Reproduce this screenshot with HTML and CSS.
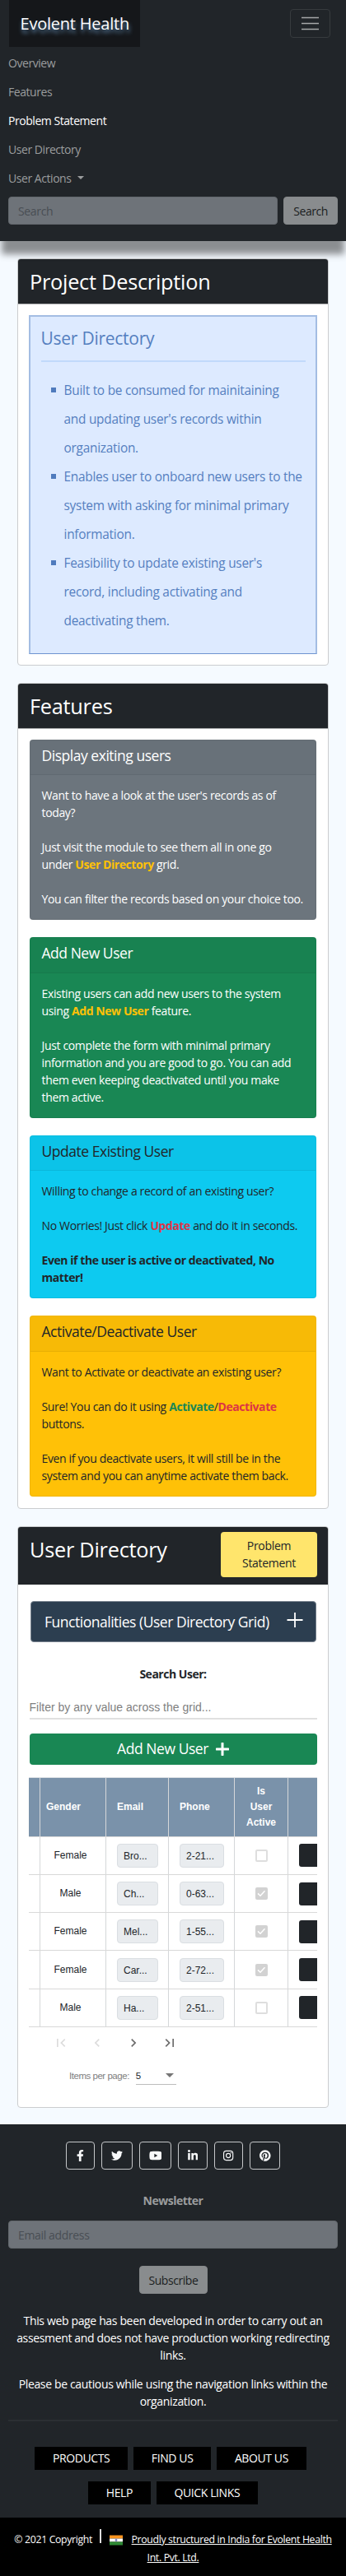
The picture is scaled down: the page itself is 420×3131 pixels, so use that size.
FILE: index.html
```html
<!DOCTYPE html>
<html lang="en">
<head>
<meta charset="utf-8">
<title>Evolent Health</title>
<link rel="stylesheet" href="styles.css">
</head>
<body>
<nav class="navbar">
  <div class="nav-top">
    <a class="brand">Evolent Health</a>
    <button class="toggler" aria-label="Menu"><svg width="21" height="21" viewBox="0 0 21 21"><path d="M0 3.5h21M0 10.5h21M0 17.5h21" stroke="#a6a8a9" stroke-width="1.6"/></svg></button>
  </div>
  <ul class="nav-list">
    <li>Overview</li>
    <li>Features</li>
    <li class="active">Problem Statement</li>
    <li>User Directory</li>
    <li>User Actions <span class="caret"></span></li>
  </ul>
  <form class="nav-search"><div class="field grow">Search</div><div class="btn-gray">Search</div></form>
</nav>

<main>
  <section class="card">
    <h3 class="card-head">Project Description</h3>
    <div class="card-body">
      <div class="notice">
        <h4>User Directory</h4>
        <hr>
        <ul>
          <li>Built to be consumed for mainitaining<br>and updating user's records within<br>organization.</li>
          <li>Enables user to onboard new users to the<br>system with asking for minimal primary<br>information.</li>
          <li>Feasibility to update existing user's<br>record, including activating and<br>deactivating them.</li>
        </ul>
      </div>
    </div>
  </section>

  <section class="card">
    <h3 class="card-head">Features</h3>
    <div class="card-body features">
      <article class="tile gray">
        <h5>Display exiting users</h5>
        <p>Want to have a look at the user's records as of<br>today?<br><br>Just visit the module to see them all in one go<br>under <b class="warn">User Directory</b> grid.<br><br>You can filter the records based on your choice too.</p>
      </article>
      <article class="tile green">
        <h5>Add New User</h5>
        <p>Existing users can add new users to the system<br>using <b class="warn">Add New User</b> feature.<br><br>Just complete the form with minimal primary<br>information and you are good to go. You can add<br>them even keeping deactivated until you make<br>them active.</p>
      </article>
      <article class="tile cyan">
        <h5>Update Existing User</h5>
        <p>Willing to change a record of an existing user?<br><br>No Worries! Just click <b class="danger">Update</b> and do it in seconds.<br><br><b>Even if the user is active or deactivated, No<br>matter!</b></p>
      </article>
      <article class="tile yellow">
        <h5>Activate/Deactivate User</h5>
        <p>Want to Activate or deactivate an existing user?<br><br>Sure! You can do it using <b class="ok">Activate</b>/<b class="danger">Deactivate</b><br>buttons.<br><br>Even if you deactivate users, it will still be in the<br>system and you can anytime activate them back.</p>
      </article>
    </div>
  </section>

  <section class="card directory">
    <div class="card-head split"><h3>User Directory</h3><div class="btn-yellow">Problem<br>Statement</div></div>
    <div class="card-body">
      <div class="accordion"><span>Functionalities (User Directory Grid)</span><svg width="20" height="20" viewBox="0 0 20 20"><path d="M.5 10h19M10 1v18" stroke="#fff" stroke-width="1.8"/></svg></div>
      <div class="search-label">Search User:</div>
      <div class="filter">Filter by any value across the grid...</div>
      <div class="btn-add">Add New User <svg width="16" height="16" viewBox="0 0 16 16"><path d="M1 8h14M8 1v14" stroke="#fff" stroke-width="3" stroke-linecap="round"/></svg></div>
      <div class="grid-wrap">
        <div class="row head"><span></span><span>Gender</span><span>Email</span><span>Phone</span><span>Is<br>User<br>Active</span><span></span></div>
        <div class="row"><span></span><span>Female</span><span><i class="cell">Bro...</i></span><span><i class="cell">2-21...</i></span><span><i class="check"></i></span><span><i class="dark"></i></span></div>
        <div class="row"><span></span><span>Male</span><span><i class="cell">Ch...</i></span><span><i class="cell">0-63...</i></span><span><i class="check on"><svg width="14" height="14" viewBox="0 0 14 14"><path d="M3 7.4l3 2.8 5.5-6" fill="none" stroke="#fff" stroke-width="1.5"/></svg></i></span><span><i class="dark"></i></span></div>
        <div class="row"><span></span><span>Female</span><span><i class="cell">Mel...</i></span><span><i class="cell">1-55...</i></span><span><i class="check on"><svg width="14" height="14" viewBox="0 0 14 14"><path d="M3 7.4l3 2.8 5.5-6" fill="none" stroke="#fff" stroke-width="1.5"/></svg></i></span><span><i class="dark"></i></span></div>
        <div class="row"><span></span><span>Female</span><span><i class="cell">Car...</i></span><span><i class="cell">2-72...</i></span><span><i class="check on"><svg width="14" height="14" viewBox="0 0 14 14"><path d="M3 7.4l3 2.8 5.5-6" fill="none" stroke="#fff" stroke-width="1.5"/></svg></i></span><span><i class="dark"></i></span></div>
        <div class="row"><span></span><span>Male</span><span><i class="cell">Ha...</i></span><span><i class="cell">2-51...</i></span><span><i class="check"></i></span><span><i class="dark"></i></span></div>
      </div>
      <div class="pager">
        <svg class="off" viewBox="0 0 24 24"><path d="M18.41 16.59L13.82 12l4.59-4.59L17 6l-6 6 6 6zM6 6h2v12H6z"/></svg>
        <svg class="off" viewBox="0 0 24 24"><path d="M15.41 7.41L14 6l-6 6 6 6 1.41-1.41L10.83 12z"/></svg>
        <svg viewBox="0 0 24 24"><path d="M10 6L8.59 7.41 13.17 12l-4.58 4.59L10 18l6-6z"/></svg>
        <svg viewBox="0 0 24 24"><path d="M5.59 7.41L10.18 12l-4.59 4.59L7 18l6-6-6-6zM16 6h2v12h-2z"/></svg>
      </div>
      <div class="page-size"><span>Items per page:</span><div class="select">5<i></i></div></div>
    </div>
  </section>
</main>

<footer>
  <div class="social">
    <a class="w36"><svg viewBox="0 0 320 512"><path d="M279.14 288l14.22-92.66h-88.91v-60.13c0-25.35 12.42-50.06 52.24-50.06h40.42V6.26S260.43 0 225.36 0c-73.22 0-121.08 44.38-121.08 124.72v70.62H22.89V288h81.39v224h100.17V288z"/></svg></a>
    <a class="w38"><svg viewBox="0 0 512 512"><path d="M459.37 151.716c.325 4.548.325 9.097.325 13.645 0 138.72-105.583 298.558-298.558 298.558-59.452 0-114.68-17.219-161.137-47.106 8.447.974 16.568 1.299 25.34 1.299 49.055 0 94.213-16.568 130.274-44.832-46.132-.975-84.792-31.188-98.112-72.772 6.498.974 12.995 1.624 19.818 1.624 9.421 0 18.843-1.3 27.614-3.573-48.081-9.747-84.143-51.98-84.143-102.985v-1.299c13.969 7.797 30.214 12.67 47.431 13.319-28.264-18.843-46.781-51.005-46.781-87.391 0-19.492 5.197-37.36 14.294-52.954 51.655 63.675 129.3 105.258 216.365 109.807-1.624-7.797-2.599-15.918-2.599-24.04 0-57.828 46.782-104.934 104.934-104.934 30.213 0 57.502 12.67 76.67 33.137 23.715-4.548 46.456-13.32 66.599-25.34-7.798 24.366-24.366 44.833-46.132 57.827 21.117-2.273 41.584-8.122 60.426-16.243-14.292 20.791-32.161 39.308-52.628 54.253z"/></svg></a>
    <a class="w39"><svg viewBox="0 0 576 512"><path d="M549.655 124.083c-6.281-23.65-24.787-42.276-48.284-48.597C458.781 64 288 64 288 64S117.22 64 74.629 75.486c-23.497 6.322-42.003 24.947-48.284 48.597-11.412 42.867-11.412 132.305-11.412 132.305s0 89.438 11.412 132.305c6.281 23.65 24.787 41.5 48.284 47.821C117.22 448 288 448 288 448s170.78 0 213.371-11.486c23.497-6.321 42.003-24.171 48.284-47.821 11.412-42.867 11.412-132.305 11.412-132.305s0-89.438-11.412-132.305zM232.145 337.591V175.185l142.739 81.205z"/></svg></a>
    <a class="w36"><svg viewBox="0 0 448 512"><path d="M100.28 448H7.4V148.9h92.88zM53.79 108.1C24.09 108.1 0 83.5 0 53.8a53.79 53.79 0 0 1 107.58 0c0 29.7-24.1 54.3-53.79 54.3zM447.9 448h-92.68V302.4c0-34.7-.7-79.2-48.29-79.2-48.29 0-55.69 37.7-55.69 76.7V448h-92.78V148.9h89.08v40.8h1.3c12.4-23.5 42.69-48.3 87.88-48.3 94 0 111.28 61.9 111.28 142.3V448z"/></svg></a>
    <a class="w36"><svg viewBox="0 0 448 512"><rect x="20" y="52" width="408" height="408" rx="112" fill="none" stroke="#f8f9fa" stroke-width="42"/><circle cx="224" cy="256" r="94" fill="none" stroke="#f8f9fa" stroke-width="42"/><circle cx="343" cy="137" r="27"/></svg></a>
    <a class="w37"><svg viewBox="0 0 496 512"><path d="M496 256c0 137-111 248-248 248-25.6 0-50.2-3.9-73.4-11.1 10.1-16.5 25.2-43.5 30.8-65 3-11.6 15.4-59 15.4-59 8.1 15.4 31.7 28.5 56.8 28.5 74.8 0 128.7-68.8 128.7-154.3 0-81.9-66.9-143.2-152.9-143.2-107 0-163.9 71.8-163.9 150.1 0 36.4 19.4 81.7 50.3 96.1 4.7 2.2 7.2 1.2 8.3-3.3.8-3.4 5-20.3 6.9-28.1.6-2.5.3-4.7-1.7-7.1-10.1-12.5-18.3-35.3-18.3-56.6 0-54.7 41.4-107.6 112-107.6 60.9 0 103.6 41.5 103.6 100.9 0 67.1-33.9 113.6-78 113.6-24.3 0-42.6-20.1-36.7-44.8 7-29.5 20.5-61.3 20.5-82.6 0-19-10.2-34.9-31.4-34.9-24.9 0-44.9 25.7-44.9 60.2 0 22 7.4 36.8 7.4 36.8s-24.5 103.8-29 123.2c-5 21.4-3 51.6-.9 71.2C65.4 450.9 0 361.1 0 256 0 119 111 8 248 8s248 111 248 248z"/></svg></a>
  </div>
  <div class="news-title">Newsletter</div>
  <div class="field">Email address</div>
  <div class="btn-gray subscribe">Subscribe</div>
  <p class="note">This web page has been developed in order to carry out an<br>assesment and does not have production working redirecting<br>links.</p>
  <p class="note">Please be cautious while using the navigation links within the<br>organization.</p>
  <hr>
  <div class="links"><a>PRODUCTS</a><a>FIND US</a><a>ABOUT US</a></div>
  <div class="links second"><a>HELP</a><a>QUICK LINKS</a></div>
</footer>
<div class="copyright">
  <div class="copy-line"><span>© 2021 Copyright</span><i class="bar"></i><svg width="16" height="13" viewBox="0 0 16 13"><path fill="#f7931e" d="M0 .5h16v4H0z"/><path fill="#fff" d="M0 4.5h16v4H0z"/><path fill="#2f8a35" d="M0 8.5h16v4H0z"/><circle cx="8" cy="6.5" r="1.4" fill="#7c7fc0"/></svg><u>Proudly structured in India for Evolent Health</u></div>
  <div class="copy-line"><u>Int. Pvt. Ltd.</u></div>
</div>
</body>
</html>
```
FILE: styles.css
```css
* { box-sizing: border-box; }
body { margin: 0; background: #f5faff; font: 14px/21px "Open Sans", "Noto Sans", sans-serif; letter-spacing: -.35px; color: #212529; white-space: nowrap; }
h3, h4, h5, p, ul { margin: 0; padding: 0; font-weight: 400; }
ul { list-style: none; }
b { letter-spacing: -.43px; }

.navbar { position: relative; height: 293px; padding: 0 10px; background: #212529; box-shadow: 0 18px 8px -2px rgba(0, 0, 0, .43); }
.nav-top { display: flex; justify-content: space-between; align-items: flex-start; height: 59px; }
.brand { width: 159px; height: 57px; margin-left: .5px; padding-left: 14px; background: #15171a; color: #fff; font-size: 20px; line-height: 58px; letter-spacing: -.22px; text-shadow: 1px 4px 5px rgba(127, 182, 232, .75); }
.toggler { display: grid; place-items: center; width: 49px; height: 35px; margin: 11px 9px 0 0; padding: 0; border: 1px solid #373b3e; border-radius: 4px; background: none; }
.nav-list { color: #9b9d9e; letter-spacing: -.45px; }
.nav-list li { height: 35px; line-height: 35px; }
.nav-list .active { color: #fff; }
.caret { display: inline-block; margin-left: 4px; border: 4px solid transparent; border-top-color: #9b9d9e; border-bottom: 0; vertical-align: 4px; }
.nav-search { display: flex; gap: 7px; margin-top: 5px; }
.field { height: 34px; padding: 0 11px; border: 1px solid #63686d; border-radius: 4px; background: #6e7379; color: #494e54; line-height: 33px; }
.grow { flex: 1; }
.btn-gray { height: 34px; padding: 0 11px; border: 1px solid #85888a; border-radius: 4px; background: #898c8e; color: #1b1e21; line-height: 33px; letter-spacing: -.45px; }

main { display: flex; flex-direction: column; gap: 21px; padding: 21px 21px 20px; }
.card { border: 1px solid #cbcdcf; border-radius: 4px; background: #fff; overflow: hidden; }
.card-head { height: 55px; padding: 0 15px 0 14px; border-bottom: 1px solid #a9abac; background: #212529; color: #fff; font-size: 25.3px; line-height: 55px; letter-spacing: -.25px; }
.card-body { padding: 13px; }

.notice { height: 411.5px; padding: 12px 12.5px; border: 2px solid #a3bde3; border-bottom: 1px solid #6e94d0; background: #ddeaff; color: #557fc0; }
.notice h4 { height: 41px; font-size: 21px; line-height: 28px; letter-spacing: -.25px; }
.notice hr { height: 2px; margin: 0 0 17px; border: 0; background: #c1d9fb; }
.notice ul { padding-left: 28px; font-size: 15.4px; line-height: 35px; letter-spacing: -.25px; }
.notice li { position: relative; }
.notice li::before { content: ""; position: absolute; left: -16px; top: 14px; width: 6px; height: 6px; background: #4f7bbd; }

.features { display: flex; flex-direction: column; gap: 21px; padding: 13px 14px 14px; }
.tile { border: 1px solid rgba(0, 0, 0, .06); border-radius: 4px; }
.tile h5 { height: 42.6px; padding: 0 14px 0 13.5px; border-bottom: 1px solid rgba(0, 0, 0, .06); background: rgba(0, 0, 0, .03); font-size: 17.5px; line-height: 36px; letter-spacing: -.47px; }
.tile p { padding: 14px 14px 14px 13.5px; }
.gray { background: #6c757d; color: #fff; }
.green { background: #198754; color: #fff; }
.cyan { background: #0dcaf0; }
.yellow { background: #ffc107; }
.warn { color: #ffc107; }
.danger { color: #dc3545; }
.ok { color: #198754; }

.split { display: flex; justify-content: space-between; height: 70px; padding: 6px 13px 0 14px; border-bottom-color: #212529; }
.split h3 { font-size: 25.3px; line-height: 43px; }
.btn-yellow { width: 117px; height: 55px; padding-top: 6px; border-radius: 4px; background: #ffe56c; color: #212529; font-size: 14px; line-height: 21px; letter-spacing: -.3px; text-align: center; }
.directory { height: 707px; }
.directory .card-body { padding: 20px 13.5px; }
.accordion { display: flex; justify-content: space-between; align-items: flex-start; height: 50px; margin: 0 1px 0 1.5px; padding: 3px 15px 0 16px; border: 1px solid #75808c; border-radius: 4px; background: #2c3e50; color: #fff; font-size: 17.5px; line-height: 42px; letter-spacing: -.48px; }
.accordion svg { margin-top: 9px; }
.search-label { margin-top: 28px; font-weight: 700; letter-spacing: -.48px; text-align: center; }
.filter { height: 45px; padding: 20px 0 0; border-bottom: 2px solid #e0e0e0; color: #808080; font-family: "Liberation Sans", Arial, sans-serif; letter-spacing: 0; }
.btn-add { display: flex; justify-content: center; align-items: center; gap: 9px; height: 38px; margin-top: 17px; border-radius: 4px; background: #198754; color: #fff; font-size: 17.5px; letter-spacing: -.45px; }

.grid-wrap { margin: 15px -.5px 0; overflow: hidden; border-top: 1px solid #dee2e6; font: 12px/18.7px "Liberation Sans", Arial, sans-serif; letter-spacing: 0; }
.row { display: grid; grid-template-columns: 8px 86px 76px 80px 65px 36px; height: 46.2px; border-bottom: 1px solid #d9d9d9; }
.row > span { display: flex; align-items: center; padding-left: 13px; border-right: 1px solid #d5d7d9; }
.row > span:last-child { border-right: 0; }
.row > span:nth-child(2), .row > span:nth-child(5) { justify-content: center; padding: 0; text-align: center; }
.head { height: 72px; background: #7a92aa; color: #fff; font-weight: 700; }
.row.head > span:nth-child(2) { justify-content: flex-start; padding-left: 13px; }
.cell { width: 50px; height: 29px; padding-left: 7px; border: 1px solid #dadee2; border-radius: 4px; background: #e9ecef; font-style: normal; line-height: 28px; }
.row > span:nth-child(4) .cell { width: 54px; }
.check { width: 15px; height: 15px; border: 2px solid #dedede; border-radius: 2px; }
.check.on { border: 0; background: #d2d2d2; }
.check svg { display: block; }
.dark { width: 40px; height: 28px; flex: none; border-radius: 3px; background: #212529; }

.pager { display: flex; gap: 24px; margin-top: 9px; padding-left: 28.5px; }
.pager svg { width: 20px; height: 20px; fill: #6c6c6c; }
.pager .off { fill: #dcdcdc; }
.page-size { display: flex; gap: 8px; margin-top: 20px; padding-left: 48.5px; font: 11.5px/20px "Liberation Sans", Arial, sans-serif; letter-spacing: -.47px; color: #808080; }
.select { display: flex; justify-content: space-between; align-items: center; width: 49px; height: 21px; padding-right: 3px; border-bottom: 1px solid #bdbdbd; color: #212529; }
.select i { border: 5px solid transparent; border-top-color: #757575; border-bottom: 0; }

footer { height: 478px; padding: 21px 10px 0; background: #212529; color: #fff; text-align: center; }
.social { display: flex; justify-content: center; gap: 8px; }
.social a { display: grid; place-items: center; height: 34px; border: 1px solid #c5c7c9; border-radius: 4px; }
.social svg { height: 14px; fill: #f8f9fa; }
.w36 { width: 35.6px; }
.w37 { width: 37px; }
.w38 { width: 37.7px; }
.w39 { width: 39.2px; }
.news-title { margin: 27px 0 14px; color: #9b9d9e; font-weight: 700; letter-spacing: -.5px; }
footer .field { text-align: left; }
.subscribe { width: 83px; margin: 21px auto 22px; }
.note { margin-bottom: 14px; }
footer hr { height: 2px; margin: -2px 0 31px; border: 0; background: #2b2f33; }
.links { display: flex; justify-content: center; gap: 6.5px; padding-right: 6px; letter-spacing: -.4px; }
.links a { padding: 0 22px; background: #000; line-height: 28px; }
.second { margin-top: 14px; padding: 0; }
.copyright { height: 71px; padding-top: 16px; background: #000; color: #fff; font-size: 12.3px; line-height: 22px; letter-spacing: -.35px; }
.copy-line { display: flex; justify-content: center; align-items: center; height: 22px; }
.bar { width: 1.5px; height: 17px; margin: -9px 10.5px 0 9px; background: #ddd; }
.copy-line svg { margin: 2px 10.5px 0 0; }
```
